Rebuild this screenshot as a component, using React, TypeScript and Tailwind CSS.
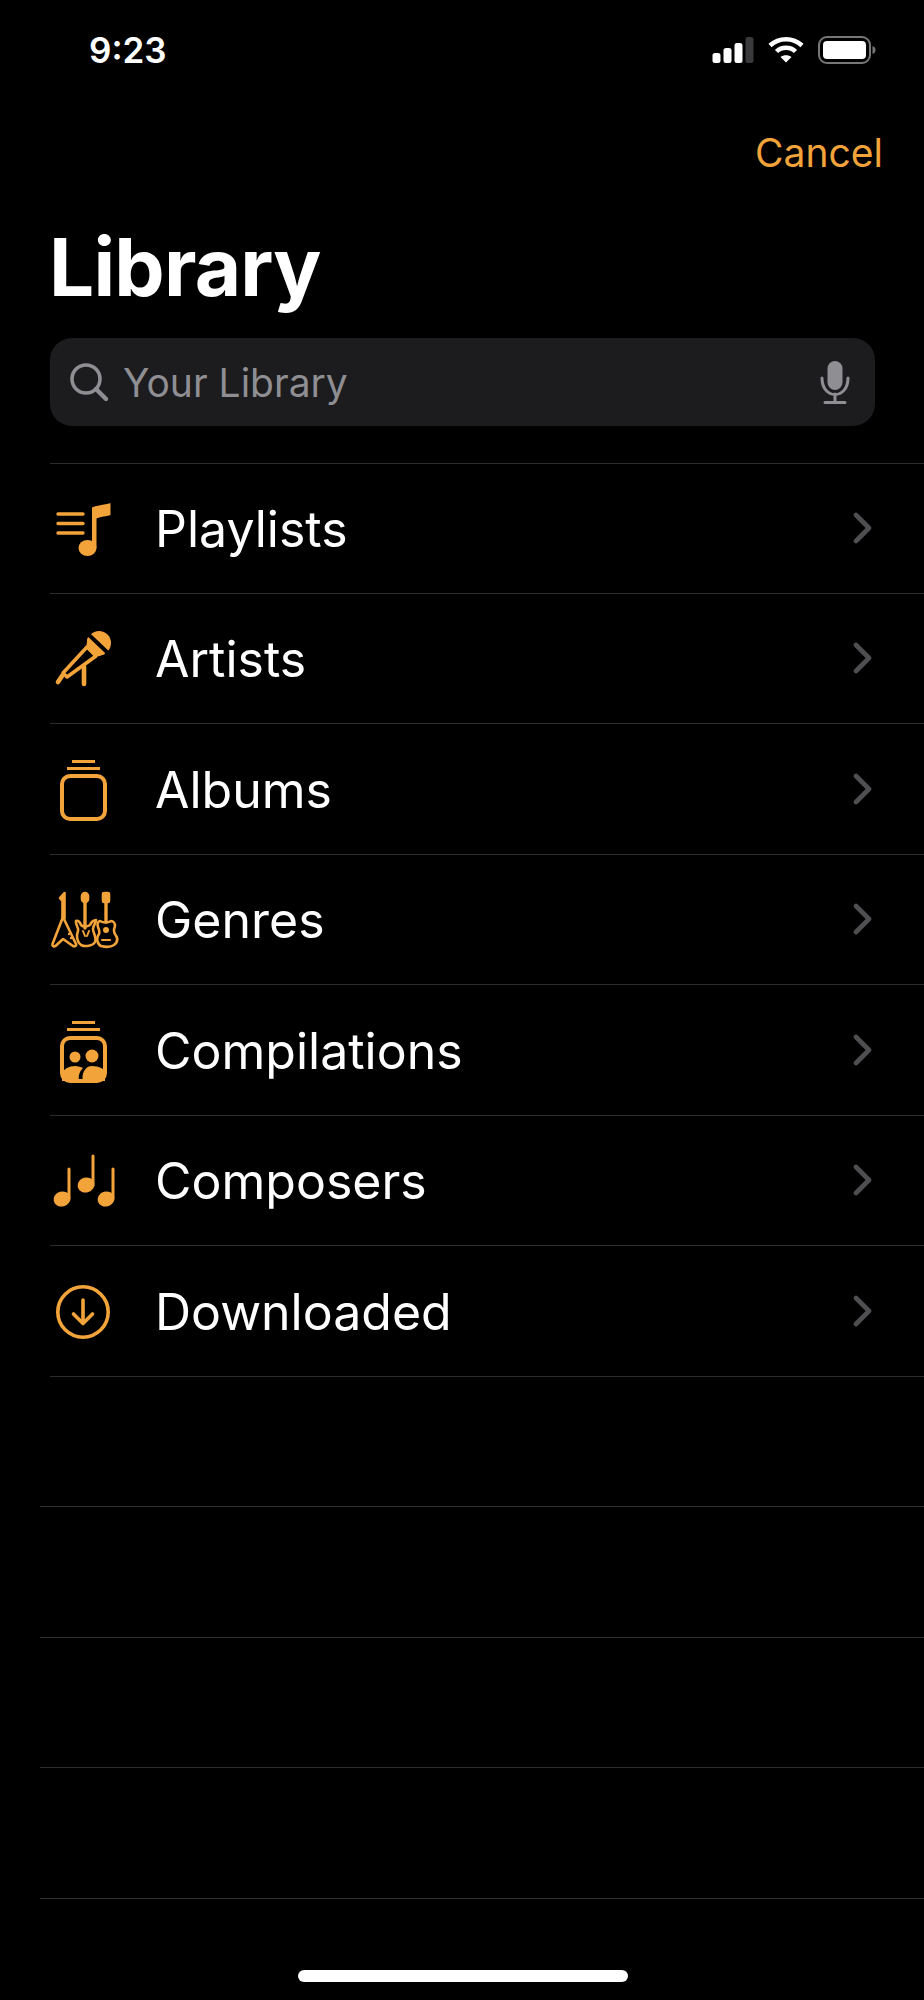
const ORANGE = "#f2a33a";

function StatusIcons() {
  return (
    <div className="flex items-center">
      <svg width="42" height="28" viewBox="0 0 42 28" fill="white">
        <rect x="0.5" y="17" width="8" height="10" rx="2.5" />
        <rect x="11.5" y="12" width="8" height="15" rx="2.5" />
        <rect x="22.5" y="7" width="8" height="20" rx="2.5" />
        <rect x="33.5" y="1" width="8" height="26" rx="2.5" fill="#3a3a3c" />
      </svg>
      <svg className="ml-[14px]" width="36" height="28" viewBox="0 0 36 28" fill="none" stroke="white" strokeWidth="4.5">
        <path d="M2 9.5C11 1 25 1 34 9.5" />
        <path d="M8.5 15.5C13.5 10.5 22.5 10.5 27.5 15.5" />
        <path d="M18 26.5L12.5 21C15.5 18.5 20.5 18.5 23.5 21Z" fill="white" stroke="none" />
      </svg>
      <svg className="ml-[14px]" width="58" height="28" viewBox="0 0 58 28">
        <rect x="1" y="1" width="51" height="26" rx="8" fill="none" stroke="#77777a" strokeWidth="2" />
        <rect x="5" y="5" width="43" height="18" rx="4" fill="white" />
        <path d="M54.5 10C57 11 57.5 12.5 57.5 14S57 17 54.5 18Z" fill="#77777a" />
      </svg>
    </div>
  );
}

function PlaylistIcon() {
  return (
    <svg width="70" height="70" viewBox="0 0 70 70" fill={ORANGE}>
      <path d="M8 21H33M8 30.5H33M8 40H33" stroke={ORANGE} strokeWidth="3.4" strokeLinecap="round" />
      <path d="M42 14.5C44 13 58 11 60.5 10V22C58 23 49 24 46.5 25.5V55H42Z" />
      <ellipse cx="37.5" cy="55" rx="9" ry="8" />
    </svg>
  );
}

function ArtistsIcon() {
  return (
    <svg width="70" height="70" viewBox="0 0 70 70" fill="none" stroke={ORANGE} strokeLinecap="round" strokeLinejoin="round">
      <path d="M38 15L37 22L48 33L54 31Z" fill={ORANGE} strokeWidth="1" />
      <circle cx="49" cy="20" r="12" fill={ORANGE} stroke="none" />
      <path d="M38 11L59 31" stroke="#000" strokeWidth="3.8" strokeLinecap="butt" />
      <path d="M37 24L46 33L17 54L13 50Z" strokeWidth="3.6" />
      <path d="M12 53L8 59" strokeWidth="4.6" />
      <path d="M34 44V61" strokeWidth="4.6" />
    </svg>
  );
}

function AlbumsIcon() {
  return (
    <svg width="70" height="70" viewBox="0 0 70 70" fill="none" stroke={ORANGE}>
      <rect x="12" y="22" width="43" height="43" rx="8" strokeWidth="4" />
      <path d="M17 14.5H50" strokeWidth="3" />
      <path d="M22 7.5H45" strokeWidth="3" />
    </svg>
  );
}

function GenresIcon() {
  return (
    <svg width="70" height="70" viewBox="0 0 70 70" fill="none" stroke={ORANGE} strokeWidth="2.6" strokeLinejoin="round" strokeLinecap="round">
      <path d="M14.5 34V9L10 14L12.5 17V34" fill={ORANGE} />
      <path d="M13 33L2.5 60C2 62 4 63 5.5 62L13 55L23 62C25 63 27 61 26 60Z" />
      <circle cx="19" cy="50" r="1.2" fill={ORANGE} stroke="none" />
      <circle cx="21" cy="54" r="1.2" fill={ORANGE} stroke="none" />
      <path d="M35 14V44" strokeWidth="3.4" />
      <rect x="32" y="9" width="6" height="9" rx="3" fill={ORANGE} />
      <path d="M26 37C25 41 29 43 28 47C26 52 27 58 31 61C35 63 43 62 45 58C47 53 43 49 43 45C43 41 46 40 46 36C44 36 41 38 40 41C37 43 33 43 31 41C30 38 28 36 26 37Z" />
      <path d="M33 47L35 52M37 52L39 47" strokeWidth="2" />
      <path d="M56 14V38" strokeWidth="3.4" />
      <rect x="53" y="9" width="6" height="9" rx="1" fill={ORANGE} />
      <path d="M50 37C48 37 47 40 48 43C49 46 50 47 49 50C46 54 47 60 51 62C55 63 61 63 64 61C68 58 68 54 65 50C63 47 64 45 65 42C65 39 63 37 61 37C58 39 53 39 50 37Z" />
      <circle cx="56" cy="46" r="3" fill={ORANGE} stroke="none" />
      <path d="M52 56H60" strokeWidth="2.2" />
    </svg>
  );
}

function CompilationsIcon() {
  return (
    <svg width="70" height="70" viewBox="0 0 70 70" fill="none" stroke={ORANGE}>
      <rect x="12" y="23" width="43" height="43" rx="8" strokeWidth="4" />
      <path d="M17 14.5H50" strokeWidth="3" />
      <path d="M22 7.5H45" strokeWidth="3" />
      <circle cx="25" cy="42" r="5.5" fill={ORANGE} stroke="none" />
      <circle cx="42" cy="41" r="6.5" fill={ORANGE} stroke="none" />
      <path d="M12 66V58C14 54 19 51 25 51C28 51 31 52 33 53C30 56 28 60 29 66Z" fill={ORANGE} stroke="none" />
      <path d="M33 66C31 59 35 51 42 51C49 51 55 54 55 58V66Z" fill={ORANGE} stroke="none" />
    </svg>
  );
}

function ComposersIcon() {
  return (
    <svg width="70" height="70" viewBox="0 0 70 70" fill={ORANGE}>
      <rect x="17.5" y="22.5" width="3" height="32" rx="1.5" />
      <ellipse cx="12" cy="54" rx="8.5" ry="7.5" transform="rotate(-15 12 54)" />
      <rect x="41.5" y="9.5" width="3" height="32" rx="1.5" />
      <ellipse cx="36" cy="40" rx="8.5" ry="7.5" transform="rotate(-15 36 40)" />
      <rect x="61.5" y="22.5" width="3" height="32" rx="1.5" />
      <ellipse cx="56" cy="54" rx="8.5" ry="7.5" transform="rotate(-15 56 54)" />
    </svg>
  );
}

function DownloadedIcon() {
  return (
    <svg width="70" height="70" viewBox="0 0 70 70" fill="none" stroke={ORANGE} strokeWidth="3.6" strokeLinecap="round" strokeLinejoin="round">
      <circle cx="33" cy="36" r="25.2" />
      <path d="M33 24V47M23.5 38L33 47.5L42.5 38" />
    </svg>
  );
}

const ITEMS = [
  { label: "Playlists", icon: PlaylistIcon },
  { label: "Artists", icon: ArtistsIcon },
  { label: "Albums", icon: AlbumsIcon },
  { label: "Genres", icon: GenresIcon },
  { label: "Compilations", icon: CompilationsIcon },
  { label: "Composers", icon: ComposersIcon },
  { label: "Downloaded", icon: DownloadedIcon },
];

export default function App() {
  return (
    <div className="relative h-[2000px] w-[924px] overflow-hidden bg-black font-['Inter','Liberation_Sans',sans-serif] text-white">
      <div className="flex h-[100px] items-center justify-between pl-[89px] pr-[48px]">
        <span className="text-[35px] leading-none font-semibold">9:23</span>
        <StatusIcons />
      </div>
      <div className="mt-[27px] flex h-[52px] justify-end pr-[41px]">
        <span className="text-[39px] leading-[52px] text-[#f2a33a]">Cancel</span>
      </div>
      <h1 className="mt-[51px] h-[74px] pl-[49px] text-[80px] leading-[74px] font-bold tracking-[-0.8px]">Library</h1>
      <div className="mt-[34px] ml-[50px] flex h-[88px] w-[825px] items-center rounded-[22px] bg-[#1c1c1e] pl-[18px] pr-[25px]">
        <svg width="42" height="42" viewBox="0 0 42 42" fill="none" stroke="#8e8e93" strokeWidth="3.6" strokeLinecap="round">
          <circle cx="18" cy="18" r="14" />
          <path d="M28 28L38 38" strokeWidth="4.4" />
        </svg>
        <span className="ml-[13px] flex-1 text-[39px] leading-none text-[#8e8e93]">Your Library</span>
        <svg width="30" height="44" viewBox="0 0 30 44" fill="none" stroke="#8e8e93" strokeWidth="3" strokeLinecap="round">
          <rect x="7.5" y="1" width="15" height="29" rx="7.5" fill="#8e8e93" stroke="none" />
          <path d="M2 18C2 40 28 40 28 18M15 34V42M5 42.5H25" />
        </svg>
      </div>
      <div className="mt-[37px] ml-[50px] border-t border-[#2c2c2e]" />
      <div className="-mt-px">
        {ITEMS.map((item) => (
          <div key={item.label} className="ml-[50px] flex h-[130.5px] items-center border-b border-[#2c2c2e] pr-[51px]">
            <div className="flex w-[105px] items-center">
              <item.icon />
            </div>
            <span className="flex-1 pt-[2px] text-[50px] leading-none text-white">{item.label}</span>
            <svg width="21" height="32" viewBox="0 0 21 32" fill="none" stroke="#4f4f52" strokeWidth="4.6" strokeLinecap="round" strokeLinejoin="round">
              <path d="M4 3L17 16L4 29" />
            </svg>
          </div>
        ))}
        {[0, 1, 2, 3].map((i) => (
          <div key={i} className="ml-[40px] h-[130.5px] border-b border-[#2c2c2e]" />
        ))}
      </div>
      <div className="absolute bottom-[18px] left-[298px] h-[12px] w-[330px] rounded-full bg-white" />
    </div>
  );
}
